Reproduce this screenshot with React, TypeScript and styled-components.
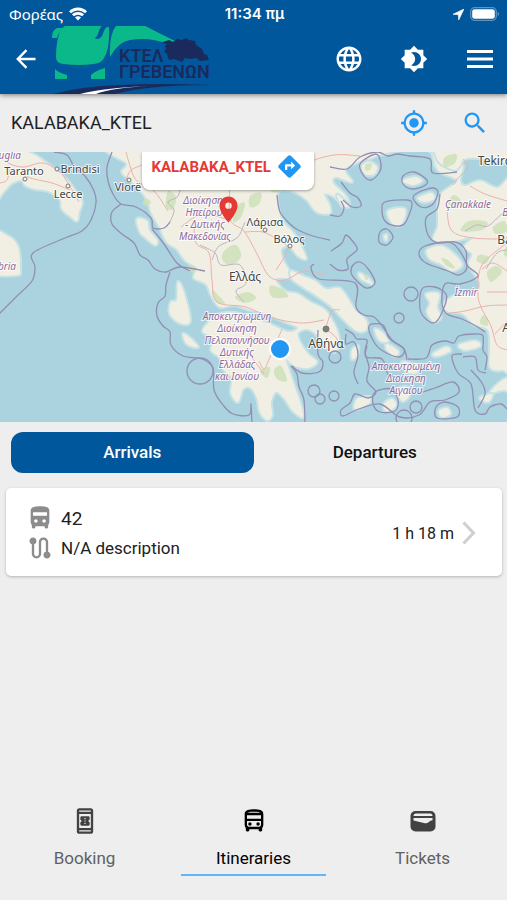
import React, { useState } from "react";
import styled, { createGlobalStyle } from "styled-components";
import {
  MdBrightness4,
  MdDirections,
  MdDirectionsBusFilled,
  MdLanguage,
  MdMyLocation,
  MdOutlineBookOnline,
  MdOutlineDirectionsBusFilled,
  MdPlace,
  MdRoute,
  MdSearch,
} from "react-icons/md";

const color = {
  brand: "#01579b",
  page: "#eeeeee",
  accent: "#2196f3",
  text: "#212121",
  muted: "#616161",
  danger: "#e53935",
};

const GlobalStyle = createGlobalStyle`
  *, *::before, *::after { box-sizing: border-box; }
  body {
    margin: 0;
    background: ${color.page};
    color: ${color.text};
    font-family: Roboto, "Noto Sans", sans-serif;
  }
  button { border: 0; padding: 0; background: none; font: inherit; color: inherit; cursor: pointer; }
  svg { display: block; flex: none; }
`;

const Screen = styled.div`
  display: flex;
  flex-direction: column;
  min-height: 100vh;
`;

const Header = styled.header`
  background: ${color.brand};
  color: #fff;
  box-shadow: 0 1px 5px rgba(0, 0, 0, 0.5);
  position: relative;
  z-index: 1;
`;

const StatusBar = styled.div`
  display: grid;
  grid-template-columns: 1fr auto 1fr;
  align-items: center;
  height: 26px;
  padding: 2px 7px 0 9px;
  font-family: "Noto Sans", sans-serif;
  font-size: 15px;
  line-height: 20px;
`;

const Carrier = styled.div`
  display: flex;
  align-items: center;
  gap: 6px;
`;

const Clock = styled.div`
  font-family: Inter, "Noto Sans", sans-serif;
  font-weight: 600;
`;

const StatusIcons = styled.div`
  display: flex;
  align-items: center;
  justify-content: flex-end;
  gap: 6px;
`;

const Toolbar = styled.div`
  display: flex;
  align-items: stretch;
  height: 68px;
  padding: 0 12px;
`;

const IconButton = styled.button<{ $size?: number }>`
  display: flex;
  align-items: center;
  justify-content: center;
  width: ${(p) => p.$size ?? 28}px;
`;

const ToolbarButton = styled(IconButton)`
  padding-bottom: 2px;
`;

const LogoSlot = styled.div`
  margin-left: 4px;
  overflow: hidden;
`;

const Actions = styled.div`
  display: flex;
  margin-left: auto;
  gap: 37px;
`;

const StopBar = styled.div`
  display: flex;
  align-items: center;
  justify-content: space-between;
  height: 58px;
  padding: 0 18px 0 11px;
  color: ${color.accent};
`;

const StopName = styled.h1`
  margin: 0;
  font-size: 18px;
  line-height: 24px;
  font-weight: 400;
  color: ${color.text};
`;

const StopActions = styled.div`
  display: flex;
  gap: 33px;
`;

const MapFrame = styled.section`
  position: relative;
  height: 270px;
  overflow: hidden;
  background: #aad3df;
`;

const MapCanvas = styled.svg`
  width: 100%;
  height: 100%;
`;

const PlaceLabel = styled.text`
  font-family: "Noto Sans", sans-serif;
  font-size: 11px;
  text-anchor: middle;
  fill: #444;
  stroke: rgba(255, 255, 255, 0.75);
  stroke-width: 2px;
  paint-order: stroke;
`;

const MajorLabel = styled(PlaceLabel)`
  font-size: 12px;
`;

const RegionLabel = styled(PlaceLabel)`
  font-size: 10px;
  font-style: italic;
  fill: #8d6a9c;
`;

const Popup = styled.div`
  position: absolute;
  left: calc(50% - 112px);
  top: 0;
  display: flex;
  align-items: center;
  gap: 5px;
  height: 38px;
  padding: 0 10px 9px;
  border-radius: 0 0 8px 8px;
  background: #fff;
  box-shadow: 0 1px 3px rgba(0, 0, 0, 0.35);
  color: ${color.danger};
  font-size: 15px;
  font-weight: 700;
`;

const StopPin = styled.div`
  position: absolute;
  left: calc(50% - 41px);
  top: 42px;
  color: ${color.danger};
`;

const UserDot = styled.div`
  position: absolute;
  left: calc(50% + 15px);
  top: 186px;
  width: 22px;
  height: 22px;
  border: 2px solid #fff;
  border-radius: 50%;
  background: ${color.accent};
`;

const Tabs = styled.div`
  display: grid;
  grid-template-columns: 1fr 1fr;
  padding: 10px 11px;
`;

const Tab = styled.button<{ $active: boolean }>`
  height: 41px;
  padding-bottom: 2px;
  border-radius: 12px;
  font-size: 17px;
  font-weight: 500;
  background: ${(p) => (p.$active ? color.brand : "transparent")};
  color: ${(p) => (p.$active ? "#fff" : "#111")};
`;

const Trip = styled.button`
  display: flex;
  align-items: center;
  justify-content: space-between;
  margin: 5px 5px 0 6px;
  padding: 16px 26px 14px 20px;
  border-radius: 5px;
  background: #fff;
  box-shadow: 0 1px 3px rgba(0, 0, 0, 0.25);
  text-align: left;
`;

const TripLines = styled.span`
  display: grid;
  gap: 2px;
`;

const TripLine = styled.span<{ $large?: boolean }>`
  display: flex;
  align-items: center;
  gap: 7px;
  height: 28px;
  font-size: ${(p) => (p.$large ? 19 : 17)}px;
  svg { color: #8c8c8c; }
`;

const Wait = styled.span`
  display: flex;
  align-items: center;
  gap: 8px;
  font-size: 16px;
`;

const BottomNav = styled.nav`
  display: grid;
  grid-template-columns: repeat(3, 1fr);
  margin-top: auto;
  padding-bottom: 24px;
`;

const NavItem = styled.button<{ $active: boolean }>`
  display: flex;
  flex-direction: column;
  align-items: center;
  gap: 11px;
  margin: 0 12px;
  padding-bottom: 4px;
  border-bottom: 2px solid ${(p) => (p.$active ? "#64b5f6" : "transparent")};
  color: ${(p) => (p.$active ? "#000" : color.muted)};
  font-size: 17px;
  line-height: 24px;
  svg { color: ${(p) => (p.$active ? "#000" : "#424242")}; }
`;

const WifiIcon = () => (
  <svg width="18" height="14" viewBox="0 0 18 14" fill="none" stroke="#fff" strokeWidth="2.8">
    <path d="M1 5.2C5.5 0.9 12.5 0.9 17 5.2" />
    <path d="M3.9 8.3C6.8 5.6 11.2 5.6 14.1 8.3" />
    <path d="M9 13.5 6 10.4C7.6 8.9 10.4 8.9 12 10.4Z" fill="#fff" stroke="none" />
  </svg>
);

const LocationArrow = () => (
  <svg width="11" height="11" viewBox="0 0 11 11">
    <path d="M11 0 0 5.3 5.3 5.7 5.7 11Z" fill="#fff" stroke="#fff" strokeWidth="0.6" strokeLinejoin="round" />
  </svg>
);

const BatteryIcon = () => (
  <svg width="30" height="14" viewBox="0 0 30 14">
    <rect x="0.7" y="0.7" width="25.6" height="12.6" rx="4" fill="none" stroke="#5d94c0" strokeWidth="1.3" />
    <rect x="2.2" y="2.2" width="22.6" height="9.6" rx="2.4" fill="#fff" />
    <path d="M27.6 5v4q1.5-.5 1.5-2t-1.5-2Z" fill="#5d94c0" />
  </svg>
);

const BackIcon = () => (
  <svg width="20" height="20" viewBox="0 0 20 20" fill="none" stroke="#fff" strokeWidth="2.4">
    <path d="M19.500 10H2M10.5 1.2 1.8 10l8.7 8.8" />
  </svg>
);

const MenuIcon = () => (
  <svg width="26" height="20" viewBox="0 0 26 20" stroke="#fff" strokeWidth="2.8">
    <path d="M0 2.5h26M0 10h26M0 17.5h26" />
  </svg>
);

const ChevronIcon = () => (
  <svg width="14" height="24" viewBox="0 0 14 24" fill="none" stroke="#cfcfcf" strokeWidth="3">
    <path d="m1.5 1.5 10 10.5-10 10.5" />
  </svg>
);

const WalletIcon = () => (
  <svg width="28" height="28" viewBox="0 0 28 28">
    <rect x="1.5" y="4" width="25" height="20.5" rx="5" fill="#424242" />
    <path d="M4.500 9Q4.500 6.500 7 6.500h14q2.500 0 2.500 2.500Z" fill={color.page} />
    <path d="M4.500 11h19v2.200q-2 .2-4 2-1.500 1.500-3.500 1L4.500 13.500Z" fill={color.page} />
  </svg>
);

const LogoText = styled.text`
  font-family: Roboto, sans-serif;
  font-size: 18px;
  font-weight: 600;
  fill: #1b2a5c;
`;

const KtelLogo = () => (
  <svg width="170" height="68" viewBox="44 26 170 68" role="img" aria-label="ΚΤΕΛ ΓΡΕΒΕΝΩΝ">
    <g fill="#0bb88a">
      <path d="M66 28H57q-5 2-5 10h5q2-7 9-10Z" />
      <path d="M69 25h34q-3 2-4 6-1 4-3 6-2 2 1 2 4 0 6-5 1-5 4-7h2q1 22-5 31-2 5-10 6-15 2-31 0-7-1-7-7 0-18 5-27 3-5 8-5Z" />
      <path d="M117 25h22q6 0 12 4l24 12-7 3q-14-5-25-5-15 0-21 4-6 4-12 14-1-25 7-32Z" />
      <path d="M55 69q2 3 12 6v4H55Z" />
      <path d="M105 68q-10 3-14 7v4h14Z" />
    </g>
    <path d="m163 42 6-2 4 2 4-3 5 1 4-2 3 2 6 1 1 4 6 4 2 5 3 1 2 5-9 1-4-3-5 1-6-1-3 4-8-3-5 1-2-6-3-2 2-3-1-3 2-2-4-1Z" fill="#1b2a5c" />
    <LogoText x="119" y="62">ΚΤΕΛ</LogoText>
    <LogoText x="119" y="78">ΓΡΕΒΕΝΩΝ</LogoText>
    <path d="M53 94q30-8 67-9 40-2 90 0-63 0-95 9Z" fill="#1b2a5c" />
    <path d="M80 94q23-6 69-8-38 2-53 8Z" fill="#fff" />
  </svg>
);

type Point = [number, number];

const parse = (source: string): Point[] =>
  source.split(" ").map((pair) => pair.split(",").map(Number) as Point);

const curve = (source: string, closed = false) => {
  const pts = parse(source);
  const n = pts.length;
  const at = (i: number) => (closed ? pts[(i + n) % n] : pts[Math.max(0, Math.min(n - 1, i))]);
  let d = `M${pts[0].join(",")}`;
  for (let i = 0; i < (closed ? n : n - 1); i++) {
    const [a, b, c, e] = [at(i - 1), at(i), at(i + 1), at(i + 2)];
    d += `C${b[0] + (c[0] - a[0]) / 6},${b[1] + (c[1] - a[1]) / 6} ${c[0] - (e[0] - b[0]) / 6},${c[1] - (e[1] - b[1]) / 6} ${c[0]},${c[1]}`;
  }
  return closed ? `${d}Z` : d;
};

const mainland = [
  "-9,-9 28,0 45,10 57,19 68,29 76,40 82,50 79,60 77,69 70,64 62,57 60,47 48,39 35,37 25,33 22,28 12,31 5,38 -9,50",
  "-9,80 8,84 18,95 20,117 17,123 -9,119",
  "124,-9 127,12 122,20 130,28 142,40 148,50 152,62 160,76 167,90 177,97 185,108 196,116 194,126 206,132 212,145 220,155 234,153 250,158 262,160 274,165 288,171 298,176 288,180 270,172 252,166 236,161 220,162 208,171 203,180 214,186 211,198 220,206 224,218 232,226 231,241 238,250 243,237 251,236 257,246 260,260 267,268 272,263 271,250 276,240 284,246 293,259 303,265 300,250 294,233 289,218 286,207 295,214 308,216 317,210 308,202 300,190 298,181 307,177 316,182 323,192 333,200 339,194 338,181 332,168 324,157 310,150 298,142 285,139 276,127 292,125 284,110 281,98 289,94 298,104 306,107 303,98 294,82 282,68 277,48 279,39 292,39 306,47 317,60 330,61 329,52 324,42 333,44 343,53 349,52 345,43 333,31 336,25 352,30 345,18 358,10 376,4 395,-9",
  "430,-9 435,4 435,14 446,21 459,17 463,8 478,6 520,12 520,-9",
  "432,-2 438,12 455,20 463,14 460,28 465,34 480,29 497,36 520,34 520,208 502,218 490,215 490,197 488,178 473,172 463,162 447,159 444,151 457,143 475,141 480,131 469,113 472,102 464,95 473,85 454,89 434,88 438,74 438,58 441,42 457,30 452,25 438,18",
  "490,241 503,228 520,224 520,243 504,238",
];

const islands = [
  "291,119 303,124 315,129 326,137 339,136 347,145 355,158 366,168 366,178 357,179 344,168 332,155 317,144 303,135 292,127",
  "137,67 147,69 149,78 157,88 155,93 146,86 140,80",
  "178,130 184,141 190,169 180,171 170,162 171,150 177,148",
  "183,182 190,186 198,195 187,192",
  "388,59 405,57 401,73 392,71",
  "362,14 369,10 377,15 374,22 365,22",
  "403,29 415,25 422,29 413,33",
  "418,46 431,41 434,47 424,50",
  "427,98 441,94 454,102 462,113 452,119 441,112 430,107",
  "426,142 439,142 437,155 441,165 434,170 427,160 430,151",
  "359,121 368,126 372,132 361,127",
  "384,84 387,83 386,89",
  "375,177 384,182 388,190 379,188",
  "387,192 398,199 395,204 387,198",
  "402,210 415,213 417,221 407,220",
  "433,202 446,195 450,199 438,204",
  "459,193 475,189 480,194 465,198",
  "352,198 358,194 357,204 352,207",
  "357,247 370,245 368,252 355,257",
  "384,252 392,247 396,254 386,259",
  "398,238 407,235 409,244 402,249",
  "439,259 447,256 450,262 442,265",
  "480,246 492,242 488,250",
  "337,43 343,47 349,54 342,54",
];

const borders = [
  "54,0 67,3 75,16 85,24 94,39 96,51 91,68 82,79 65,86 33,101 35,115 32,129 16,145 -2,163",
  "112,0 107,15 108,29 113,42 121,52 136,55 151,66 153,76 164,76 170,70",
  "121,52 112,60 112,72 122,82 134,91 140,103 148,108 155,117 166,120 180,115 205,119",
  "170,120 166,133 165,144 158,151 157,164 163,174 170,180 171,193 183,204 202,207 213,216 214,238 223,253 233,262 249,263 251,252 252,275",
  "152,77 164,92 177,111 190,119",
  "277,43 280,60 290,72 298,78 313,84 330,88",
  "330,15 347,17 360,5 377,0 388,4 397,2 410,4 430,7 433,21 457,20",
  "440,42 437,57 426,66 428,83 438,91 456,90 466,99 467,113 478,124 460,132 445,132 442,151 447,162 462,167 476,174 485,180",
  "314,112 311,116 319,127 355,131 356,155 364,163 374,165 383,175 392,188 404,197 407,208",
  "291,214 297,222 299,235 304,248 305,275",
  "292,214 302,221 319,220 323,210 318,202 318,178",
  "330,112 338,118 348,117 347,107 357,98 354,91 346,83 342,91 331,99",
  "330,63 340,64 344,56 341,49",
  "341,30 350,41 358,46 361,54 352,55 343,48",
  "345,177 353,182 357,187 367,188 365,200 369,215 367,229 376,240 368,246 355,242 350,251 341,258 343,264 359,257 380,252 400,265 419,263 430,250 445,248 459,240 453,230 435,236 420,241",
  "346,182 346,192 354,190 358,203 354,220 358,232",
  "367,194 366,205 382,207 388,222 396,225",
  "408,207 426,206 432,193 445,189 454,191 459,184 475,182 483,184 483,198 487,205 485,218",
  "462,202 452,204 458,221 471,232 475,258 485,262 490,255 501,252 507,257",
  "463,205 475,205 478,218 486,221",
  "471,218 482,231 485,242 478,256",
];

const rings = [
  "360,12 364,24 371,28 379,21 381,12 376,2",
  "403,24 414,20 427,28 424,34 412,37 403,32",
  "385,50 407,48 412,53 405,71 396,74 385,69 382,58",
  "413,46 419,40 433,36 438,41 432,53 421,55",
  "380,80 387,77 393,85 387,93 379,90",
  "353,113 360,110 369,118 375,131 366,136 354,126 351,120",
  "425,94 448,90 459,98 467,115 459,123 448,119 426,111 419,102",
  "422,137 435,135 446,142 445,153 436,170 427,168 420,157",
  "369,174 383,173 389,186 404,197 399,205 383,199 374,190",
  "375,240 391,237 398,248 395,259 380,260 373,252",
  "436,255 445,250 458,255 457,265 437,266",
];

const circles: [number, number, number][] = [
  [200, 219, 13],
  [314, 239, 6],
  [320, 247, 5],
  [335, 205, 6],
  [334, 244, 5],
  [411, 142, 7],
  [399, 166, 5],
  [416, 255, 6],
  [404, 266, 8],
];

const woods = [
  "145,46 151,50 147,54 143,52",
  "168,39 176,45 173,57 166,55",
  "168,16 178,19 174,26 168,24",
  "225,98 236,93 241,105 230,113 222,107",
  "237,54 245,51 241,65 233,70",
  "273,26 282,30 278,40 270,38",
  "250,44 261,41 259,52 250,55",
  "190,113 197,116 192,121 188,117",
  "235,145 248,140 256,146 245,151",
  "274,218 281,214 287,229 277,227",
  "260,219 270,215 267,226",
  "270,134 282,137 288,145 272,145",
  "212,137 219,144 225,152 216,150",
  "444,6 456,2 455,11 445,15",
  "461,79 469,69 487,70 482,78",
  "493,75 504,69 507,79 496,82",
  "479,103 489,105 485,112 477,109",
  "487,120 496,114 502,120 491,130",
  "454,43 461,49 455,56 448,51",
  "483,163 488,167 487,174 480,171",
  "506,95 512,92 512,105 504,103",
  "366,12 372,12 370,18 365,18",
  "363,121 368,126 366,128",
  "441,106 448,108 455,116 447,114",
];

const roads = [
  "0,5 10,12 24,15 43,11 60,20 69,33 79,50",
  "10,15 7,28 0,31",
  "25,16 28,25 52,31 70,38",
  "126,0 131,17 137,29 154,39 168,59",
  "150,0 143,12 131,18 126,28",
  "202,0 207,13 228,30 230,67 244,79 256,100 269,124 285,128 304,119 323,123",
  "194,69 196,91 209,101 212,128 217,150 246,155 269,165 300,171 324,168",
  "229,68 202,62 181,75",
  "245,80 263,80 278,88 288,97 276,118",
  "260,0 266,17 279,35",
  "290,31 306,12 334,3 360,4",
  "282,177 270,205 264,217 259,209",
  "248,200 264,222",
  "326,175 332,159 340,158",
  "326,177 337,187 334,196",
  "463,7 468,15 458,26 453,33",
  "447,60 452,79 473,86 507,87",
  "470,34 485,42 507,49",
  "507,91 482,113 478,140 481,155 491,174 497,193 507,198",
  "444,162 465,159 486,154 507,153",
  "482,117 493,111 507,119",
  "495,182 507,169",
  "487,140 507,140",
];

const AegeanMap = () => (
  <MapCanvas viewBox="0 0 507 270" preserveAspectRatio="xMidYMid slice" role="img" aria-label="Map of Greece">
    <rect width="507" height="270" fill="#aad3df" />
    <g fill="#f1efe4" stroke="#c6e2e4" strokeWidth="4" strokeLinejoin="round" paintOrder="stroke">
      {mainland.map((d) => <path key={d} d={curve(d, true)} />)}
      {islands.map((d) => <path key={d} d={curve(d, true)} />)}
    </g>
    <g fill="#cde1b6" opacity="0.8">
      {woods.map((d) => <path key={d} d={curve(d, true)} />)}
    </g>
    <g fill="none" stroke="#ecb0ac" strokeWidth="1">
      {roads.map((d) => <path key={d} d={curve(d)} />)}
    </g>
    <g fill="none" stroke="#bdb5c0" strokeWidth="1">
      <path d={curve("170,70 174,58 168,50 178,44 183,29 197,20 198,0")} />
      <path d={curve("200,93 215,101 221,113 240,113 246,131 236,139 244,150")} />
      <path d={curve("245,70 237,86 219,94 212,108")} />
      <path d={curve("465,79 477,73 488,74 502,62 507,64")} />
      <path d={curve("486,117 497,101 507,98")} />
    </g>
    <g fill="none" stroke="#938fb4" strokeWidth="1.3" strokeLinejoin="round">
      {borders.map((d) => <path key={d} d={curve(d)} />)}
      {rings.map((d) => <path key={d} d={curve(d, true)} />)}
      {circles.map(([cx, cy, r]) => <circle key={`${cx}-${cy}`} cx={cx} cy={cy} r={r} />)}
    </g>
    <g fill="#f5f3ef" stroke="#777" strokeWidth="1">
      <circle cx="25" cy="27" r="2" />
      <circle cx="57" cy="17" r="2" />
      <circle cx="68" cy="34" r="2" />
      <circle cx="129" cy="28" r="2" />
      <circle cx="265" cy="78" r="2" />
      <circle cx="290" cy="94" r="2" />
      <circle cx="326" cy="177" r="3" fill="#857c74" />
    </g>
    <PlaceLabel x="24" y="23">Taranto</PlaceLabel>
    <PlaceLabel x="80" y="21">Brindisi</PlaceLabel>
    <PlaceLabel x="68" y="46">Lecce</PlaceLabel>
    <PlaceLabel x="128" y="39">Vlorë</PlaceLabel>
    <PlaceLabel x="265" y="74">Λάρισα</PlaceLabel>
    <PlaceLabel x="289" y="91">Βόλος</PlaceLabel>
    <MajorLabel x="245" y="129">Ελλάς</MajorLabel>
    <MajorLabel x="326" y="196">Αθήνα</MajorLabel>
    <MajorLabel x="502" y="13">Tekirdağ</MajorLabel>
    <MajorLabel x="521" y="92">Balıkesir</MajorLabel>
    <MajorLabel x="518" y="180">Aydın</MajorLabel>
    <RegionLabel x="7" y="7">Puglia</RegionLabel>
    <RegionLabel x="-3" y="118">Calabria</RegionLabel>
    <RegionLabel x="203" y="52">Διοίκηση</RegionLabel>
    <RegionLabel x="204" y="64">Ηπείρου</RegionLabel>
    <RegionLabel x="205" y="76">- Δυτικής</RegionLabel>
    <RegionLabel x="205" y="88">Μακεδονίας</RegionLabel>
    <RegionLabel x="237" y="168">Αποκεντρωμένη</RegionLabel>
    <RegionLabel x="237" y="180">Διοίκηση</RegionLabel>
    <RegionLabel x="237" y="192">Πελοποννήσου</RegionLabel>
    <RegionLabel x="237" y="204">Δυτικής</RegionLabel>
    <RegionLabel x="237" y="216">Ελλάδας</RegionLabel>
    <RegionLabel x="237" y="228">και Ιονίου</RegionLabel>
    <RegionLabel x="406" y="218">Αποκεντρωμένη</RegionLabel>
    <RegionLabel x="406" y="230">Διοίκηση</RegionLabel>
    <RegionLabel x="406" y="242">Αιγαίου</RegionLabel>
    <RegionLabel x="468" y="56">Çanakkale</RegionLabel>
    <RegionLabel x="466" y="144">İzmir</RegionLabel>
    <RegionLabel x="521" y="64">Balıkesir</RegionLabel>
  </MapCanvas>
);

const navItems = [
  { label: "Booking", icon: <MdOutlineBookOnline size={28} /> },
  { label: "Itineraries", icon: <MdOutlineDirectionsBusFilled size={28} /> },
  { label: "Tickets", icon: <WalletIcon /> },
];

export default function App() {
  const [tab, setTab] = useState("Arrivals");
  const [section, setSection] = useState("Itineraries");

  return (
    <Screen>
      <GlobalStyle />
      <Header>
        <StatusBar>
          <Carrier>Φορέας <WifiIcon /></Carrier>
          <Clock>11:34 πμ</Clock>
          <StatusIcons><LocationArrow /><BatteryIcon /></StatusIcons>
        </StatusBar>
        <Toolbar>
          <ToolbarButton aria-label="Back"><BackIcon /></ToolbarButton>
          <LogoSlot><KtelLogo /></LogoSlot>
          <Actions>
            <ToolbarButton aria-label="Language"><MdLanguage size={30} /></ToolbarButton>
            <ToolbarButton aria-label="Theme"><MdBrightness4 size={28} /></ToolbarButton>
            <ToolbarButton $size={30} aria-label="Menu"><MenuIcon /></ToolbarButton>
          </Actions>
        </Toolbar>
      </Header>
      <StopBar>
        <StopName>KALABAKA_KTEL</StopName>
        <StopActions>
          <IconButton aria-label="My location"><MdMyLocation size={28} /></IconButton>
          <IconButton aria-label="Search"><MdSearch size={28} /></IconButton>
        </StopActions>
      </StopBar>
      <MapFrame>
        <AegeanMap />
        <StopPin><MdPlace size={31} /></StopPin>
        <UserDot />
        <Popup>
          KALABAKA_KTEL
          <IconButton aria-label="Directions"><MdDirections size={27} color={color.accent} /></IconButton>
        </Popup>
      </MapFrame>
      <Tabs role="tablist">
        {["Arrivals", "Departures"].map((name) => (
          <Tab key={name} role="tab" aria-selected={tab === name} $active={tab === name} onClick={() => setTab(name)}>
            {name}
          </Tab>
        ))}
      </Tabs>
      <Trip>
        <TripLines>
          <TripLine $large><MdDirectionsBusFilled size={28} />42</TripLine>
          <TripLine><MdRoute size={28} />N/A description</TripLine>
        </TripLines>
        <Wait>1 h 18 m <ChevronIcon /></Wait>
      </Trip>
      <BottomNav>
        {navItems.map(({ label, icon }) => (
          <NavItem key={label} $active={section === label} onClick={() => setSection(label)}>
            {icon}
            {label}
          </NavItem>
        ))}
      </BottomNav>
    </Screen>
  );
}
